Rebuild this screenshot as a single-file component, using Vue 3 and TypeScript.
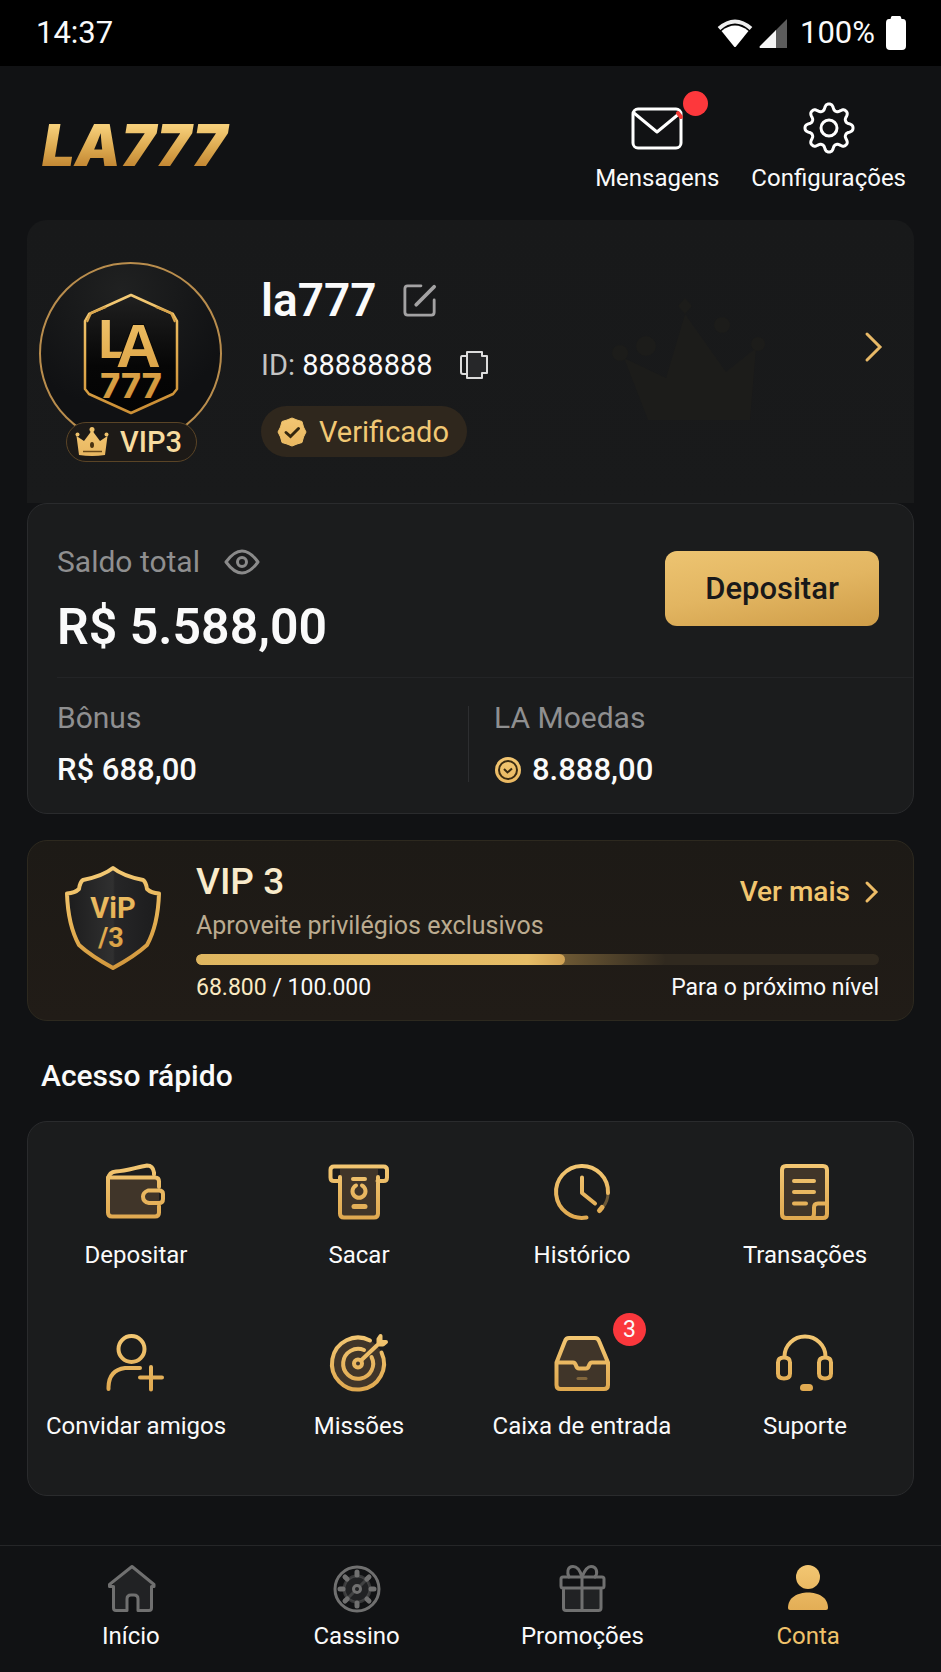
<script setup lang="ts">
import { computed, ref } from 'vue'

type Kind = 'line' | 'tint' | 'solid' | 'thick' | 'faint'

interface Shape {
  d: string
  kind: Kind
}

interface Action {
  label: string
  shapes: Shape[]
  badge?: number
}

interface Tab {
  label: string
  shapes: Shape[]
  active?: boolean
}

function circle(cx: number, cy: number, r: number): string {
  return `M${cx - r} ${cy}a${r} ${r} 0 1 0 ${2 * r} 0a${r} ${r} 0 1 0 ${-2 * r} 0z`
}

function gearOutline(cx: number, cy: number, mean: number, depth: number): string {
  const steps = 192
  const points: string[] = []
  for (let i = 0; i < steps; i++) {
    const angle = (i / steps) * Math.PI * 2
    const r = mean + (depth * Math.tanh(1.3 * Math.cos(8 * angle))) / Math.tanh(1.3)
    points.push(`${(cx + r * Math.sin(angle)).toFixed(2)} ${(cy - r * Math.cos(angle)).toFixed(2)}`)
  }
  return `M${points.join('L')}Z`
}

function spokes(cx: number, cy: number, from: number, to: number): string {
  let d = ''
  for (let i = 0; i < 8; i++) {
    const a = (i * Math.PI) / 4
    d += `M${(cx + from * Math.cos(a)).toFixed(2)} ${(cy + from * Math.sin(a)).toFixed(2)}`
    d += `L${(cx + to * Math.cos(a)).toFixed(2)} ${(cy + to * Math.sin(a)).toFixed(2)}`
  }
  return d
}

const gear = gearOutline(26, 26, 21, 3)

const actions: Action[] = [
  {
    label: 'Depositar',
    shapes: [
      { kind: 'tint', d: 'M1 13.500H48q4 0 4 4V48.500q0 4-4 4H5q-4 0-4-4Z' },
      { kind: 'line', d: 'M52 23V17.500q0-4-4-4H1V48.500q0 4 4 4H48q4 0 4-4V42' },
      { kind: 'line', d: 'M1 15q1-7 8-7.500C20 7 30 3 40 1.500q6 0 7 7v2' },
      { kind: 'line', d: 'M41 26.500H52q4 0 4 3.500v5q0 4-4 4H42q-6-1-6-6.500 0-4 5-6z' }
    ]
  },
  {
    label: 'Sacar',
    shapes: [
      { kind: 'tint', d: 'M10 5H48V49.500q0 4-4 4H14q-4 0-4-4Z' },
      { kind: 'line', d: 'M10 17H4q-3.500 0-3.500-3.500V6q0-3.500 3.500-3.500H53.500Q57 2.500 57 6v7.500Q57 17 53.500 17H47.500M10 13V49.500q0 4 4 4H44q4 0 4-4V13' },
      { kind: 'line', d: 'M23 15H35M26 21.500a6.500 6.500 0 1 0 6 0' },
      { kind: 'thick', d: 'M24 42.500H35' }
    ]
  },
  {
    label: 'Histórico',
    shapes: [
      { kind: 'line', d: 'M33.500 53.500A26 26 0 1 1 55 29M29 13.500V29L42 39.500' },
      { kind: 'faint', d: 'M55 29q0 8-5 14' },
      { kind: 'thick', d: 'M46.500 46.500L49 43.500' }
    ]
  },
  {
    label: 'Transações',
    shapes: [
      { kind: 'tint', d: 'M10 2H47q4 0 4 4V50q0 4-4 4H10q-4 0-4-4V6q0-4 4-4z' },
      { kind: 'line', d: 'M10 2H47q4 0 4 4V50q0 4-4 4H10q-4 0-4-4V6q0-4 4-4z' },
      { kind: 'line', d: 'M18 17H38M18 28H38M18 39.500H30' },
      { kind: 'line', d: 'M51 39.500H42q-4 0-4 4V49q0 5-3 5' }
    ]
  },
  {
    label: 'Convidar amigos',
    shapes: [
      { kind: 'line', d: circle(24.5, 14, 13) },
      { kind: 'line', d: 'M1.500 54V52Q2 35 18 33H33' },
      { kind: 'line', d: 'M44 32V54.500M33 42.500H55' }
    ]
  },
  {
    label: 'Missões',
    shapes: [
      { kind: 'tint', d: circle(28, 28.5, 26) },
      { kind: 'line', d: 'M40 5.500A26 26 0 1 0 51.500 17.500' },
      { kind: 'line', d: 'M34 15A15 15 0 1 0 41.500 22' },
      { kind: 'line', d: circle(28, 28.5, 4) },
      { kind: 'line', d: 'M31 25.500L49 8.500M48.500 9V4L50.500 1V7H56L53 9.500H48' }
    ]
  },
  {
    label: 'Caixa de entrada',
    badge: 3,
    shapes: [
      { kind: 'tint', d: 'M3.500 27.500L12 6q1-3 4-3H42q3 0 4 3L55 27.500V50q0 4-4 4H7.500q-4 0-4-4Z' },
      { kind: 'line', d: 'M3.500 27.500L12 6q1-3 4-3H42q3 0 4 3L55 27.500V50q0 4-4 4H7.500q-4 0-4-4ZM3.500 27.500H20q2 0 3 3t3 3h7q2 0 3-3t3-3H55' },
      { kind: 'faint', d: 'M25 43.500H33' }
    ]
  },
  {
    label: 'Suporte',
    shapes: [
      { kind: 'line', d: 'M8.500 22V21.500a20.500 20 0 0 1 41 0V22' },
      { kind: 'line', d: 'M8 22.500q6 0 6 5v11q0 5-6 5t-6-5v-11q0-5 6-5zM49 22.500q6 0 6 5v11q0 5-6 5t-6-5v-11q0-5 6-5z' },
      { kind: 'solid', d: 'M28 49h5q4 0 4 4 0 3-3 3h-7q-3 0-3-3 0-4 4-4z' }
    ]
  }
]

const tabs: Tab[] = [
  {
    label: 'Início',
    shapes: [
      { kind: 'tint', d: 'M6.500 20L25 3L44.500 20V46H30V32H20V46H6.500Z' },
      { kind: 'line', d: 'M6.500 22.500H2.500V20.500L25 2.500L47 20.500V22.500H44.500V44q0 2.500-2.500 2.500H31V35q0-4-4-4H24q-4 0-4 4V46.500H9q-2.500 0-2.500-2.500Z' }
    ]
  },
  {
    label: 'Cassino',
    shapes: [
      { kind: 'tint', d: circle(24, 25, 13) },
      { kind: 'line', d: circle(24, 25, 22) },
      { kind: 'faint', d: circle(24, 25, 13) },
      { kind: 'line', d: circle(24, 25, 3.5) },
      { kind: 'thick', d: spokes(24, 25, 14, 17) },
      { kind: 'faint', d: 'M27 22L33 16M21 28L14 35' }
    ]
  },
  {
    label: 'Promoções',
    shapes: [
      { kind: 'tint', d: 'M5.500 24H43V46.500H5.500Z' },
      { kind: 'line', d: 'M5 13H44q2 0 2 2v7q0 2-2 2H5q-2 0-2-2v-7q0-2 2-2zM5.500 24V44q0 2.500 2.500 2.500H40.500q2.500 0 2.500-2.500V24M24 13V46.500' },
      { kind: 'line', d: 'M24 13Q21 2.500 15 2.500C9 2.500 9 9 11 13M24 13Q28 2.500 33 2.500C39 2.500 40 9 37 13' }
    ]
  },
  {
    label: 'Conta',
    active: true,
    shapes: [
      { kind: 'solid', d: circle(24, 13, 12) },
      { kind: 'solid', d: 'M4 44C4 33 14 28.500 24 28.500S44 33 44 44q0 2-2 2H6q-2 0-2-2z' }
    ]
  }
]

const hidden = ref(false)
const total = computed(() => (hidden.value ? 'R$ ••••••' : 'R$ 5.588,00'))

const points = 68800
const goal = 100000
const fillShare = 54
const reachShare = computed(() => (points / goal) * 100)
const format = (n: number) => n.toLocaleString('de-DE')
</script>

<template>
  <div class="screen">
    <svg class="defs" width="0" height="0" aria-hidden="true">
      <defs>
        <linearGradient id="gold" gradientUnits="userSpaceOnUse" x1="0" y1="0" x2="0" y2="56">
          <stop offset="0" stop-color="#f3c773" />
          <stop offset="1" stop-color="#dfa84f" />
        </linearGradient>
        <linearGradient id="goldTall" gradientUnits="userSpaceOnUse" x1="0" y1="0" x2="20" y2="120">
          <stop offset="0" stop-color="#f6cf7c" />
          <stop offset="0.5" stop-color="#e6b255" />
          <stop offset="1" stop-color="#cc9036" />
        </linearGradient>
        <linearGradient id="dark" x1="0" y1="0" x2="0" y2="1">
          <stop offset="0" stop-color="#202020" />
          <stop offset="0.6" stop-color="#060606" />
          <stop offset="1" stop-color="#030303" />
        </linearGradient>
        <linearGradient id="steel" x1="0" y1="0" x2="1" y2="0">
          <stop offset="0" stop-color="#1c1c1d" />
          <stop offset="0.5" stop-color="#303030" />
          <stop offset="0.52" stop-color="#262627" />
          <stop offset="1" stop-color="#1c1c1d" />
        </linearGradient>
      </defs>
    </svg>

    <div class="status">
      <span>14:37</span>
      <div class="status-right">
        <svg width="36" height="30" viewBox="0 0 36 30" aria-hidden="true">
          <path d="M2 10.500Q18-3.500 34 10.500" fill="none" stroke="#eee" stroke-width="4" />
          <path d="M4.500 13Q18 2 31.500 13L19 28.500q-1 1-2 0Z" fill="#fff" />
        </svg>
        <svg class="signal" width="28" height="29" viewBox="0 0 28 29" aria-hidden="true">
          <path d="M28 0V29H16V12Z" fill="#5c5c5c" />
          <path d="M17 11V29H1q-1-1 0-2Z" fill="#f4f4f4" />
        </svg>
        <span>100%</span>
        <svg class="battery" width="20" height="34" viewBox="0 0 20 34" aria-hidden="true">
          <path d="M6 0h8q1 0 1.500 3H17q3 0 3 4V30q0 4-4 4H4q-4 0-4-4V7q0-4 3-4H4.500Q5 0 6 0Z" fill="#fff" />
        </svg>
      </div>
    </div>

    <header class="top">
      <div class="brand">LA777</div>
      <div class="top-actions">
        <button type="button" class="top-action">
          <span class="icon-wrap">
            <svg width="52" height="52" viewBox="0 0 52 52" fill="none" stroke="#fff" stroke-width="3" stroke-linejoin="round" stroke-linecap="round" aria-hidden="true">
              <rect x="2" y="7" width="48" height="39" rx="5" />
              <path d="M3 11L26 30L49 11" />
              <path d="M47 11L50 15" stroke="#f53b36" stroke-width="4" />
            </svg>
            <i class="dot"></i>
          </span>
          Mensagens
        </button>
        <button type="button" class="top-action">
          <span class="icon-wrap">
            <svg width="52" height="52" viewBox="0 0 52 52" fill="none" stroke="#fff" stroke-width="3" stroke-linejoin="round" aria-hidden="true">
              <path :d="gear" />
              <circle cx="26" cy="26" r="8" />
            </svg>
          </span>
          Configurações
        </button>
      </div>
    </header>

    <main>
      <section class="profile">
        <svg class="watermark" width="170" height="140" viewBox="0 0 170 140" aria-hidden="true">
          <g fill="#1c1c1a">
            <path d="M16 60L58 80L77 16L118 74L148 50L142 122H40Z" />
            <circle cx="12" cy="55" r="8" />
            <circle cx="38" cy="48" r="10" />
            <path d="M77 0L84 8L77 16L70 8Z" />
            <circle cx="114" cy="27" r="8" />
            <circle cx="150" cy="46" r="7" />
          </g>
        </svg>
        <div class="avatar">
          <svg width="98" height="124" viewBox="0 0 98 124" aria-hidden="true">
            <path d="M49 3L91 22L95 29V97L91 102L49 121L7 102L3 97V29L7 22Z" fill="url(#dark)" stroke="url(#goldTall)" stroke-width="2.500" stroke-linejoin="round" />
            <path d="M5 30L9 21L24 15M93 30L89 21L74 15" fill="none" stroke="#d9a54c" stroke-width="2" />
            <text x="16" y="66" class="crest-letter">L</text>
            <text x="34" y="75" class="crest-letter crest-big">A</text>
            <text x="49" y="106" text-anchor="middle" class="crest-number">777</text>
          </svg>
          <div class="level">
            <svg width="34" height="30" viewBox="0 0 34 30" aria-hidden="true">
              <path d="M4 28L1.500 9L9 14L15 6L17 2L19 6L25 14L32.500 9L30 28Q17 30 4 28Z" fill="url(#gold)" />
              <circle cx="2.500" cy="7.500" r="2" fill="#efc26b" />
              <circle cx="17" cy="2.500" r="2.500" fill="#efc26b" />
              <circle cx="31.500" cy="7.500" r="2" fill="#efc26b" />
              <path d="M8 24.500H27" stroke="#6b4a19" stroke-width="1.500" />
              <ellipse cx="17" cy="18" rx="2" ry="3" fill="#4a3312" />
            </svg>
            <span>VIP3</span>
          </div>
        </div>
        <div class="info">
          <div class="name-row">
            <h1>la777</h1>
            <button type="button" class="plain" aria-label="Editar nome">
              <svg width="34" height="36" viewBox="0 0 36 36" fill="none" stroke="#a3a2a3" stroke-width="3" stroke-linejoin="round" stroke-linecap="round" aria-hidden="true">
                <path d="M19 3H5Q2 3 2 6V31Q2 34 5 34H30Q33 34 33 31V18" />
                <path d="M14 23L33 4" stroke-width="4" />
              </svg>
            </button>
          </div>
          <div class="id-row">
            <p><span>ID:</span> 88888888</p>
            <button type="button" class="plain" aria-label="Copiar ID">
              <svg width="30" height="30" viewBox="0 0 30 30" fill="none" stroke="#dcdcdc" stroke-width="2" stroke-linejoin="round" aria-hidden="true">
                <path d="M8 2H23V6H28V23H23V28H8Z" fill="#262729" />
                <path d="M7 6H3Q2 6 2 8V22Q2 24 4 24H7" />
              </svg>
            </button>
          </div>
          <div class="verified">
            <svg width="30" height="30" viewBox="0 0 30 30" aria-hidden="true">
              <path d="M15 1L20 3L25 4.500L26.500 10L29 15L26.500 20L25 25.500L20 27L15 29L10 27L5 25.500L3.500 20L1 15L3.500 10L5 4.500L10 3Z" fill="url(#gold)" stroke="#efc26b" stroke-width="1" stroke-linejoin="round" />
              <path d="M9 15.500L13.500 19.500L21.500 11.500" fill="none" stroke="#33270f" stroke-width="3" stroke-linecap="round" />
            </svg>
            Verificado
          </div>
        </div>
        <button type="button" class="plain go" aria-label="Abrir perfil">
          <svg width="24" height="36" viewBox="0 0 24 36" fill="none" stroke="#e8b967" stroke-width="3" stroke-linecap="round" aria-hidden="true">
            <path d="M6 5L19 18L6 31" />
          </svg>
        </button>
      </section>

      <section class="card balance">
        <div class="balance-top">
          <div>
            <div class="balance-label">
              <span class="muted">Saldo total</span>
              <button type="button" class="plain" aria-label="Mostrar ou ocultar saldo" @click="hidden = !hidden">
                <svg width="36" height="26" viewBox="0 0 36 26" fill="none" stroke="#8a8a8a" stroke-width="3" stroke-linejoin="round" aria-hidden="true">
                  <path d="M2 13Q10 2 18 2T34 13Q26 24 18 24T2 13Z" />
                  <circle cx="18" cy="13" r="4.500" />
                </svg>
              </button>
            </div>
            <div class="total">{{ total }}</div>
          </div>
          <button type="button" class="deposit">Depositar</button>
        </div>
        <div class="balance-bottom">
          <div class="pocket">
            <span class="muted">Bônus</span>
            <strong>R$ 688,00</strong>
          </div>
          <div class="pocket pocket-coins">
            <span class="muted">LA Moedas</span>
            <strong>
              <svg width="28" height="28" viewBox="0 0 28 28" aria-hidden="true">
                <circle cx="14" cy="14" r="13" fill="url(#gold)" />
                <circle cx="14" cy="14" r="9" fill="none" stroke="#3b2b12" stroke-width="2" />
                <path d="M10 13L13.500 16.500L18 12.500" fill="none" stroke="#3b2b12" stroke-width="2" />
              </svg>
              8.888,00
            </strong>
          </div>
        </div>
      </section>

      <section class="card vip">
        <svg class="vip-shield" width="96" height="106" viewBox="0 0 96 106" aria-hidden="true">
          <path d="M48 3Q58 11 78 15Q81 17 82 24Q86 28 94 28.500Q93 60 82 80Q70 91 48 103Q26 91 14 80Q3 60 2 28.500Q10 28 14 24Q15 17 18 15Q38 11 48 3Z" fill="url(#steel)" stroke="url(#goldTall)" stroke-width="4" stroke-linejoin="round" />
          <text x="48" y="53" text-anchor="middle" class="shield-top">ViP</text>
          <text x="46" y="82" text-anchor="middle" class="shield-bottom">/3</text>
        </svg>
        <div class="vip-body">
          <div class="vip-head">
            <div>
              <h2>VIP 3</h2>
              <p>Aproveite privilégios exclusivos</p>
            </div>
            <a href="#vip" class="more">
              Ver mais
              <svg width="14" height="24" viewBox="0 0 14 24" fill="none" stroke="#edbc66" stroke-width="3" stroke-linecap="round" aria-hidden="true">
                <path d="M2 3L11 12L2 21" />
              </svg>
            </a>
          </div>
          <div class="bar" role="progressbar" aria-label="Progresso VIP" :aria-valuenow="points" aria-valuemin="0" :aria-valuemax="goal">
            <div class="bar-reach" :style="{ width: reachShare + '%' }"></div>
            <div class="bar-fill" :style="{ width: fillShare + '%' }"></div>
          </div>
          <div class="vip-foot">
            <span><b>{{ format(points) }}</b> / {{ format(goal) }}</span>
            <span>Para o próximo nível</span>
          </div>
        </div>
      </section>

      <h2 class="heading">Acesso rápido</h2>

      <section class="card quick">
        <button v-for="action in actions" :key="action.label" type="button" class="quick-item">
          <span class="icon-wrap">
            <svg width="58" height="56" viewBox="0 0 58 56" aria-hidden="true">
              <path v-for="(shape, i) in action.shapes" :key="i" :d="shape.d" :class="shape.kind" />
            </svg>
            <i v-if="action.badge" class="count">{{ action.badge }}</i>
          </span>
          {{ action.label }}
        </button>
      </section>
    </main>

    <nav class="tabs">
      <a v-for="tab in tabs" :key="tab.label" href="#" :class="['tab', { active: tab.active }]">
        <svg width="48" height="48" viewBox="0 0 48 48" aria-hidden="true">
          <path v-for="(shape, i) in tab.shapes" :key="i" :d="shape.d" :class="shape.kind" />
        </svg>
        {{ tab.label }}
      </a>
    </nav>
  </div>
</template>

<style>
body {
  margin: 0;
  background: #111214;
}
</style>

<style scoped>
.screen {
  min-height: 100vh;
  display: flex;
  flex-direction: column;
  background: #111214;
  color: #fafafa;
  font-family: Roboto, "Liberation Sans", sans-serif;
  font-size: 24px;
  line-height: 28px;
}

.screen * {
  box-sizing: border-box;
}

svg {
  display: block;
  flex: none;
  overflow: visible;
}

button {
  font: inherit;
  color: inherit;
  border: 0;
  padding: 0;
  background: none;
  cursor: pointer;
}

a {
  color: inherit;
  text-decoration: none;
}

h1,
h2,
p {
  margin: 0;
}

.defs {
  position: absolute;
}

.status {
  height: 66px;
  padding: 0 35px 0 36px;
  display: flex;
  align-items: center;
  justify-content: space-between;
  background: #000;
  font-size: 31px;
  line-height: 36px;
}

.status-right {
  display: flex;
  align-items: center;
}

.signal {
  margin: 0 13px 0 6px;
}

.battery {
  margin-left: 11px;
}

.top {
  height: 154px;
  padding: 36px 35px 0 42px;
  display: flex;
  justify-content: space-between;
}

.brand {
  margin-top: 11px;
  height: 64px;
  padding-right: 8px;
  font-family: Inter, Roboto, sans-serif;
  font-size: 58px;
  line-height: 64px;
  font-weight: 900;
  font-style: italic;
  color: transparent;
  background: linear-gradient(#f6cf7a 20%, #dca94f 55%, #bd7f2d 90%);
  background-clip: text;
  -webkit-background-clip: text;
}

.top-actions {
  display: flex;
  gap: 32px;
}

.top-action {
  display: flex;
  flex-direction: column;
  align-items: center;
  gap: 10px;
  height: 90px;
}

.icon-wrap {
  position: relative;
}

.dot {
  position: absolute;
  top: -11px;
  right: -25px;
  width: 25px;
  height: 25px;
  border-radius: 50%;
  background: #fd383c;
}

main {
  flex: 1;
  padding: 0 27px;
}

.profile {
  position: relative;
  min-height: 283px;
  padding: 42px 29px 0 12px;
  display: flex;
  align-items: flex-start;
  background: linear-gradient(#18191a, #191a1b);
  border-radius: 20px 20px 0 0;
}

.watermark {
  position: absolute;
  top: 78px;
  right: 136px;
}

.avatar {
  position: relative;
  width: 183px;
  height: 183px;
  padding-top: 28px;
  display: flex;
  justify-content: center;
  border: 2px solid #b98d4d;
  border-radius: 50%;
  background: radial-gradient(circle at 45% 15%, #202121, #101113 65%);
}

.crest-letter {
  font-family: "Liberation Sans", Arial, sans-serif;
  font-weight: 700;
  font-size: 56px;
  fill: url(#goldTall);
}

.crest-big {
  font-size: 62px;
  stroke: #0b0a08;
  stroke-width: 2px;
  paint-order: stroke;
}

.crest-number {
  font-family: Inter, Roboto, sans-serif;
  font-weight: 800;
  font-size: 34px;
  fill: url(#goldTall);
}

.level {
  position: absolute;
  left: 25px;
  bottom: -19px;
  width: 131px;
  height: 40px;
  padding-right: 6px;
  display: flex;
  align-items: center;
  justify-content: center;
  gap: 11px;
  border: 1px solid #5a4426;
  border-radius: 20px;
  background: #1d1a17;
  color: #f8dc9f;
  font-size: 29px;
  font-weight: 500;
}

.info {
  flex: 1;
  margin-left: 39px;
  padding-top: 14px;
}

.name-row,
.id-row {
  display: flex;
  align-items: center;
}

.name-row {
  gap: 26px;
}

h1 {
  font-size: 46px;
  line-height: 48px;
  font-weight: 600;
}

.id-row {
  margin: 23px 0;
  gap: 26px;
  font-size: 29px;
  line-height: 36px;
}

.id-row span {
  color: #c4c4c4;
}

.verified {
  width: max-content;
  height: 51px;
  padding: 0 18px 0 16px;
  display: flex;
  align-items: center;
  gap: 12px;
  border-radius: 26px;
  background: #2f271d;
  color: #f1c874;
  font-size: 29px;
}

.go {
  margin-top: 67px;
}

.card {
  border: 1px solid #2a2b2d;
  border-radius: 20px;
  background: #1b1c1d;
}

.muted {
  color: #8f8f90;
  font-size: 30px;
  line-height: 36px;
}

.balance-top {
  margin-left: 29px;
  padding: 40px 34px 21px 0;
  display: flex;
  justify-content: space-between;
  align-items: flex-start;
  border-bottom: 1px solid #232426;
}

.balance-label {
  display: flex;
  align-items: center;
  gap: 24px;
}

.total {
  margin-top: 18px;
  font-size: 50px;
  line-height: 58px;
  font-weight: 600;
}

.deposit {
  margin-top: 7px;
  width: 214px;
  height: 75px;
  border-radius: 12px;
  background: linear-gradient(170deg, #edc471, #e2b561 50%, #cf9d48);
  color: #19191a;
  font-size: 31px;
  font-weight: 500;
}

.balance-bottom {
  padding: 22px 34px 26px 29px;
  display: grid;
  grid-template-columns: 1fr 1fr;
}

.pocket {
  display: flex;
  flex-direction: column;
  gap: 17px;
}

.pocket-coins {
  position: relative;
  padding-left: 26px;
}

.pocket-coins::before {
  content: "";
  position: absolute;
  left: 0;
  top: 6px;
  bottom: 5px;
  width: 1px;
  background: #2d2e30;
}

.pocket strong {
  display: flex;
  align-items: center;
  gap: 10px;
  font-size: 31px;
  line-height: 34px;
  font-weight: 500;
}

.vip {
  margin-top: 26px;
  padding: 20px 34px 18px 37px;
  display: flex;
  gap: 35px;
  border-color: #2d291f;
  background: linear-gradient(#1d1a16, #211c17);
}

.vip-shield {
  margin-top: 4px;
}

.shield-top,
.shield-bottom {
  font-family: Roboto, "Liberation Sans", sans-serif;
  font-weight: 700;
  font-size: 29px;
  fill: url(#goldTall);
}

.shield-bottom {
  font-size: 27px;
}

.vip-body {
  flex: 1;
}

.vip-head {
  display: flex;
  justify-content: space-between;
  align-items: flex-start;
}

.vip h2 {
  font-size: 37px;
  line-height: 42px;
  font-weight: 500;
  color: #f9ebcb;
}

.vip p {
  margin-top: 7px;
  font-size: 25px;
  line-height: 32px;
  color: #bbab90;
}

.more {
  margin-top: 14px;
  display: flex;
  align-items: center;
  gap: 15px;
  font-size: 28px;
  line-height: 34px;
  font-weight: 500;
  color: #f2c66f;
}

.bar {
  position: relative;
  margin-top: 12px;
  height: 11px;
  border-radius: 6px;
  background: #30291f;
  overflow: hidden;
}

.bar-reach,
.bar-fill {
  position: absolute;
  inset: 0 auto 0 0;
  border-radius: 6px;
}

.bar-reach {
  background: linear-gradient(90deg, #6e5934 78%, #4c3f29 90%, #30291f);
}

.bar-fill {
  background: linear-gradient(90deg, #dfb660, #e5bc66 90%, #cfa154);
}

.vip-foot {
  margin-top: 9px;
  display: flex;
  justify-content: space-between;
  font-size: 23px;
}

.vip-foot b {
  font-weight: 400;
  color: #fbeac2;
}

.heading {
  margin: 37px 14px 27px;
  font-size: 30px;
  line-height: 36px;
  font-weight: 500;
}

.quick {
  padding: 42px 0 55px;
  display: grid;
  grid-template-columns: repeat(4, 25.2%);
  justify-content: center;
  row-gap: 66px;
}

.quick-item {
  display: flex;
  flex-direction: column;
  align-items: center;
  gap: 21px;
  white-space: nowrap;
}

.line,
.thick,
.faint {
  fill: none;
  stroke: url(#gold);
  stroke-width: 3px;
  stroke-linejoin: round;
  stroke-linecap: round;
}

.quick .line {
  stroke-width: 4px;
}

.thick {
  stroke-width: 5px;
}

.faint {
  opacity: 0.4;
}

.tint {
  fill: #d69a58;
  opacity: 0.2;
}

.solid {
  fill: url(#gold);
}

.count {
  position: absolute;
  top: -22px;
  left: 60px;
  width: 33px;
  height: 33px;
  border-radius: 50%;
  background: #fa373c;
  font-size: 23px;
  line-height: 33px;
  font-style: normal;
  text-align: center;
}

.tabs {
  margin-top: 48px;
  padding: 18px 20px 22px 18px;
  display: grid;
  grid-template-columns: repeat(4, 1fr);
  border-top: 1px solid #252628;
}

.tab {
  display: flex;
  flex-direction: column;
  align-items: center;
  gap: 10px;
}

.tab .line,
.tab .thick,
.tab .faint {
  stroke: #707070;
}

.tab .tint {
  fill: #888;
  opacity: 0.14;
}

.tab.active {
  color: #f0c26b;
}
</style>
